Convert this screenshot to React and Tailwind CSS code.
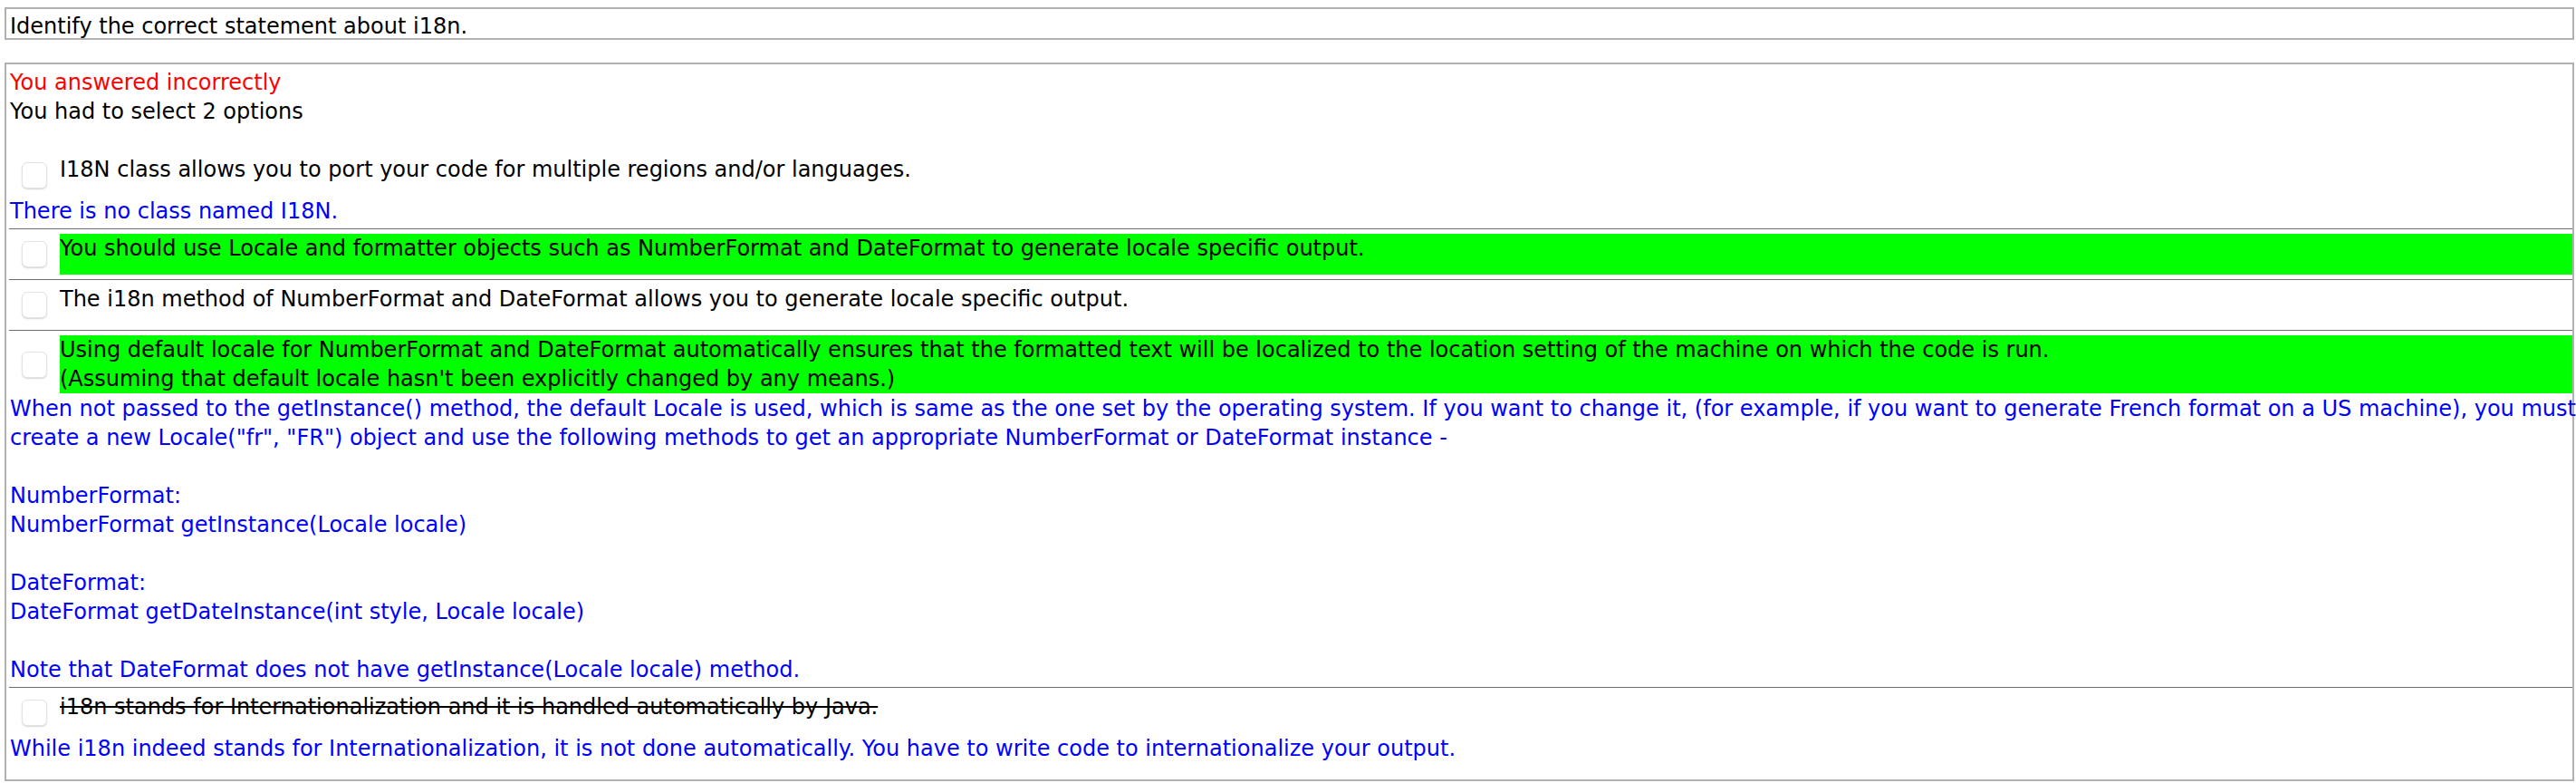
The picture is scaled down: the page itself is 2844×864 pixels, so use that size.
import React from "react";

function Checkbox() {
  return (
    <div className="w-[28px] h-[29px] rounded-[6px] border border-[#e3e3e3] bg-white shadow-[0_1px_1.5px_rgba(0,0,0,0.16)]" />
  );
}

function Item({ lines, green, strike, expl, first, last }) {
  return (
    <div className={(first ? "" : "pt-[5px] ") + (last ? "" : expl ? "pb-[3px]" : "pb-[5px]")}>
      <div className="flex items-stretch min-h-[45px]">
        <div className="w-[56px] shrink-0 flex items-center pl-[14px]">
          <Checkbox />
        </div>
        <div className={"flex-1 " + (green ? "bg-[#00ff00]" : "")}>
          {lines.map((l, i) => (
            <div key={i} className={"whitespace-nowrap " + (strike ? "line-through" : "")}>
              {l}
            </div>
          ))}
        </div>
      </div>
      {expl && (
        <div className="mt-[1px] pl-[1px] text-[#0000ff] whitespace-nowrap">
          {expl.map((l, i) =>
            l === "" ? <div key={i} className="h-[32px]" /> : <div key={i}>{l}</div>
          )}
        </div>
      )}
    </div>
  );
}

function Hr() {
  return <div className="h-px bg-[#6e6e6e]" />;
}

export default function App() {
  return (
    <div className="font-['DejaVu_Sans','Verdana',sans-serif] text-[24px] leading-[32px] text-black bg-white w-[2844px] h-[864px] pt-[8px] overflow-hidden">
      <div className="ml-[5px] w-[2837px] h-[36px] border-2 border-[#b1b1b1] pl-[4px] pt-[3px] whitespace-nowrap">
        Identify the correct statement about i18n.
      </div>
      <div className="ml-[5px] mt-[25px] w-[2837px] border-2 border-[#b1b1b1] pl-[3px] pt-[4px] pb-[18px]">
        <div className="pl-[1px] text-[#ff0000]">You answered incorrectly</div>
        <div className="pl-[1px]">You had to select 2 options</div>
        <div className="h-[32px]" />
        <Item
          first
          lines={["I18N class allows you to port your code for multiple regions and/or languages."]}
          expl={["There is no class named I18N."]}
        />
        <Hr />
        <Item
          green
          lines={[
            "You should use Locale and formatter objects such as NumberFormat and DateFormat to generate locale specific output.",
          ]}
        />
        <Hr />
        <Item
          lines={["The i18n method of NumberFormat and DateFormat allows you to generate locale specific output."]}
        />
        <Hr />
        <Item
          green
          lines={[
            "Using default locale for NumberFormat and DateFormat automatically ensures that the formatted text will be localized to the location setting of the machine on which the code is run.",
            "(Assuming that default locale hasn't been explicitly changed by any means.)",
          ]}
          expl={[
            "When not passed to the getInstance() method, the default Locale is used, which is same as the one set by the operating system. If you want to change it, (for example, if you want to generate French format on a US machine), you must",
            "create a new Locale(\"fr\", \"FR\") object and use the following methods to get an appropriate NumberFormat or DateFormat instance -",
            "",
            "NumberFormat:",
            "NumberFormat getInstance(Locale locale)",
            "",
            "DateFormat:",
            "DateFormat getDateInstance(int style, Locale locale)",
            "",
            "Note that DateFormat does not have getInstance(Locale locale) method.",
          ]}
        />
        <Hr />
        <Item
          last
          strike
          lines={["i18n stands for Internationalization and it is handled automatically by Java."]}
          expl={[
            "While i18n indeed stands for Internationalization, it is not done automatically. You have to write code to internationalize your output.",
          ]}
        />
      </div>
    </div>
  );
}
